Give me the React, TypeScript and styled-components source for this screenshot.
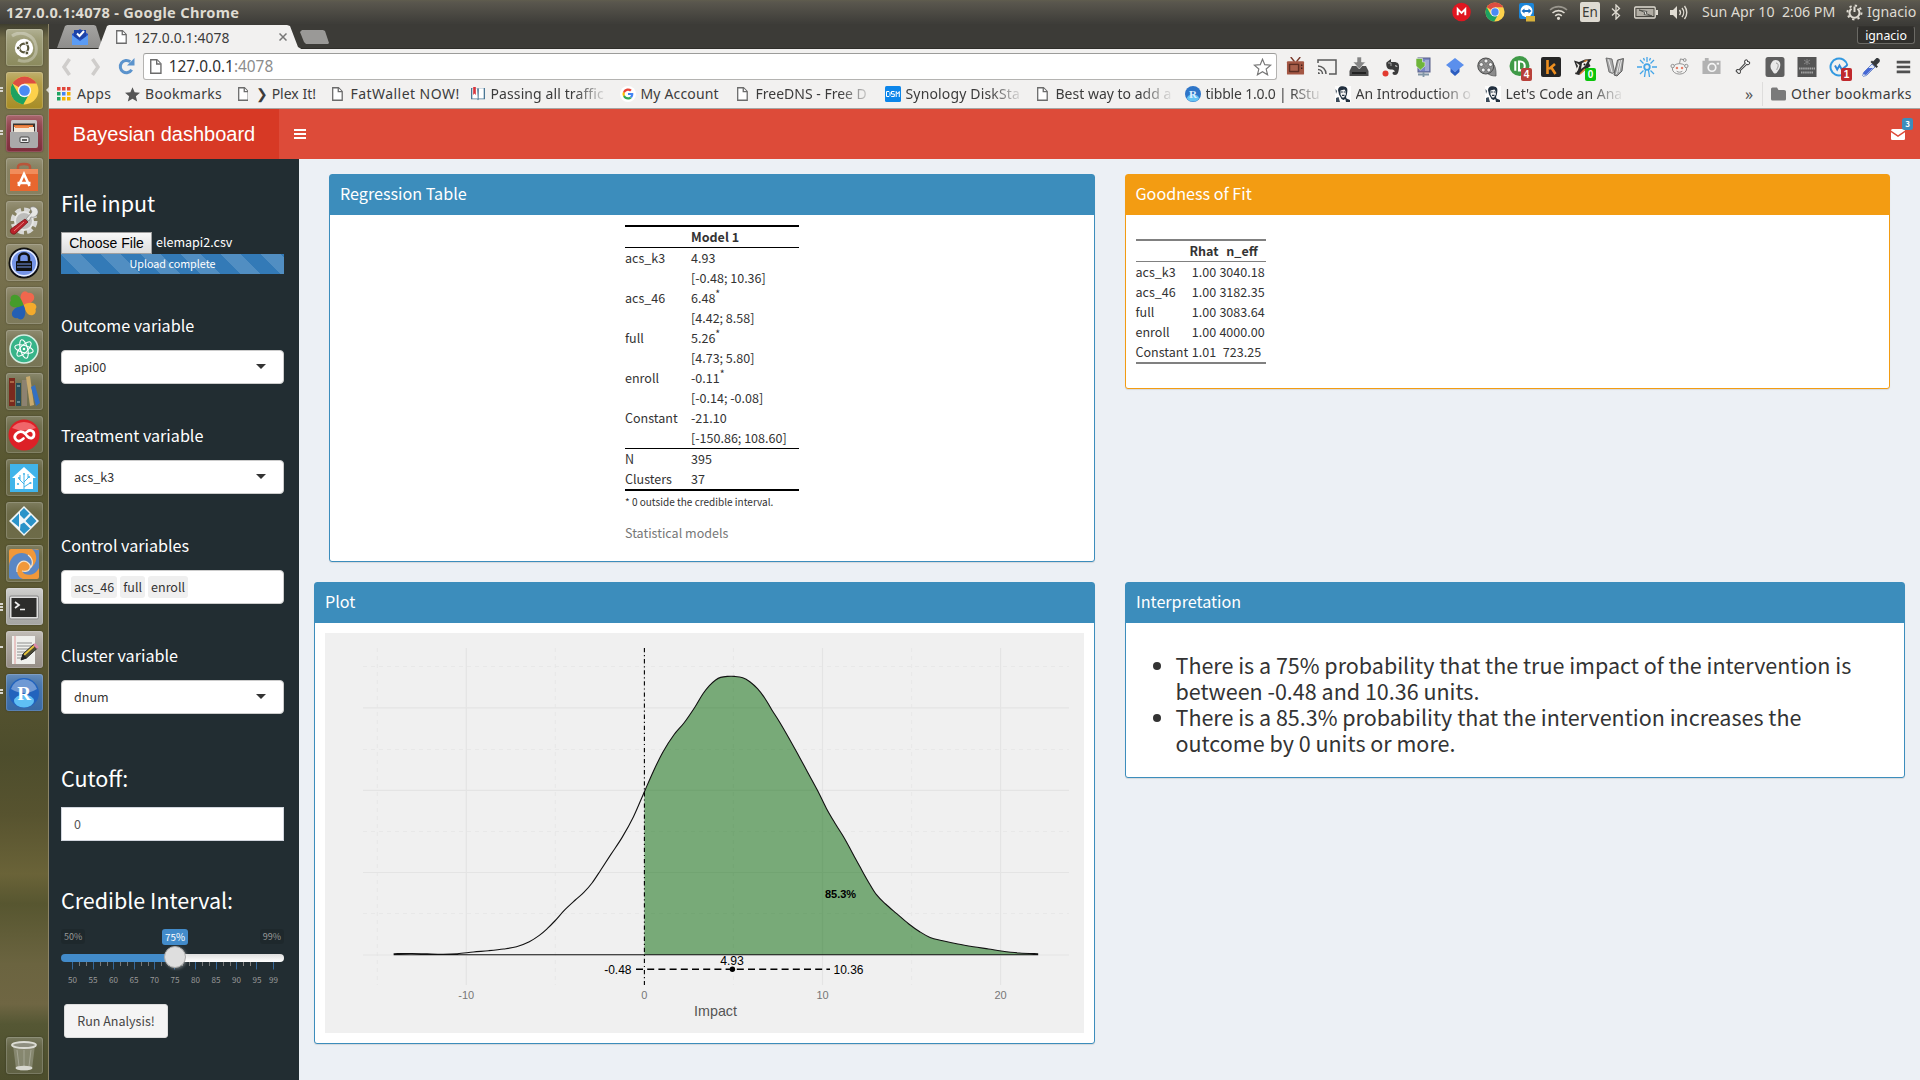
import React from "react";
import styled, { createGlobalStyle, css } from "styled-components";

const SANS = `"Noto Sans CJK SC", "Noto Sans", sans-serif`;
const UBUNTU = `"Noto Sans", "Open Sans", sans-serif`;
const ARIAL = `"Liberation Sans", Arial, sans-serif`;

const Global = createGlobalStyle`
  * { box-sizing: border-box; }
  body { margin: 0; background: #ecf0f5; overflow: hidden; }
  svg { display: block; }
`;

/* ---------- desktop ---------- */
const Desktop = styled.div`
  width: 1920px;
  height: 1080px;
  display: flex;
  flex-direction: column;
  font-family: ${SANS};
  font-size: 12.54px;
  color: #333;
`;
const TopPanel = styled.header`
  height: 24px;
  flex: none;
  display: flex;
  align-items: center;
  justify-content: space-between;
  padding: 0 5px 0 6px;
  background: linear-gradient(#605d4e 0, #5a574e 2px, #3e3d39 23px);
  color: #dfdbd2;
  font-family: ${UBUNTU};
`;
const WindowTitle = styled.div`
  font-size: 14.6px;
  font-weight: 700;
  letter-spacing: 0.3px;
  line-height: 24px;
`;
const Tray = styled.div`
  display: flex;
  align-items: center;
  height: 24px;
`;
const TraySlot = styled.div<{ $w: number }>`
  width: ${(p) => p.$w}px;
  display: flex;
  justify-content: center;
`;
const TrayText = styled.div<{ $w: number }>`
  width: ${(p) => p.$w}px;
  font-size: 14.2px;
  line-height: 24px;
  white-space: pre;
`;
const LangBadge = styled.div`
  width: 20px;
  height: 20px;
  border-radius: 2px;
  background: #dfdbd2;
  color: #3c3b37;
  font-size: 13.5px;
  line-height: 20px;
  text-align: center;
`;
const Main = styled.div`
  flex: 1;
  display: flex;
  min-height: 0;
`;

/* ---------- launcher ---------- */
const Launcher = styled.nav`
  width: 49px;
  flex: none;
  display: flex;
  flex-direction: column;
  align-items: center;
  gap: 6px;
  padding: 5px 0 6px;
  border-right: 1px solid #8b8468;
  background: linear-gradient(
    #3f3e2e 0, #6f6a48 14px, #79734f 120px, #77704d 250px, #6a6744 330px, #56552f 450px, #5e5b34 540px,
    #595531 640px, #4d4d2c 730px, #57532f 790px, #6a6338 850px, #575630 880px, #6b6440 940px, #6f6643 980px,
    #555734 1000px, #4c4d2c 1056px
  );
`;
const Tile = styled.div<{ $bg?: string; $last?: boolean }>`
  position: relative;
  width: 37px;
  height: 37px;
  flex: none;
  border-radius: 3px;
  background: ${(p) => p.$bg || "rgba(255,255,255,.11)"};
  box-shadow: inset 0 0 0 1px rgba(255, 255, 255, 0.16), inset 0 8px 8px -4px rgba(255, 255, 255, 0.16), 0 0 2px rgba(0, 0, 0, 0.35);
  display: flex;
  align-items: center;
  justify-content: center;
  ${(p) => p.$last && css`margin-top: auto;`}
`;
const Pips = styled.div`
  position: absolute;
  left: -6px;
  top: 15px;
  width: 3px;
  display: grid;
  gap: 1px;
`;
const Pip = styled.i`
  height: 2px;
  background: #d8d6cf;
`;
const FocusArrow = styled.i`
  position: absolute;
  right: -6px;
  top: 15px;
  border: 3px solid transparent;
  border-right-color: #dcdad2;
  border-left: 0;
`;

/* ---------- browser ---------- */
const Browser = styled.div`
  flex: 1;
  display: flex;
  flex-direction: column;
  min-width: 0;
`;
const TabStrip = styled.div`
  height: 25px;
  flex: none;
  display: flex;
  justify-content: space-between;
  background: #3c3b37;
  border-bottom: 1px solid #2f2e2a;
  font-family: ${UBUNTU};
`;
const Tabs = styled.div`
  display: flex;
  padding: 1px 0 0 8px;
`;
const PinnedTab = styled.div`
  width: 46px;
  height: 23px;
  display: flex;
  justify-content: center;
  padding-top: 3px;
  background: linear-gradient(#a5a4a2, #8e8d8b);
  clip-path: polygon(8px 1px, 10px 0, 37px 0, 39px 1px, 46px 23px, 0 23px);
`;
const ActiveTab = styled.div`
  width: 205px;
  height: 25px;
  margin-left: -5px;
  display: flex;
  align-items: center;
  padding: 0 16px 1px 18px;
  background: #f2f1f0;
  color: #3c3c3c;
  font-size: 13.9px;
  clip-path: polygon(9px 1px, 11px 0, 189px 0, 192px 1px, 200px 22px, 205px 25px, 0 25px);
`;
const TabTitle = styled.span`
  flex: 1;
  margin-left: 7px;
  letter-spacing: 0.1px;
`;
const NewTab = styled.div`
  width: 29px;
  height: 14px;
  margin: 5px 0 0 -3px;
  background: #9a9997;
  clip-path: polygon(2px 0, 23px 0, 25px 1px, 29px 13px, 28px 14px, 6px 14px, 4px 12px, 0 2px);
`;
const Profile = styled.div`
  height: 18px;
  width: 58px;
  margin: 2px 5px 0 0;
  border: 1px solid #6b6a65;
  border-top-color: #33322e;
  border-radius: 3px;
  background: #302f2c;
  color: #fff;
  font-size: 12.3px;
  line-height: 17px;
  text-align: center;
`;
const Toolbar = styled.div`
  height: 34px;
  flex: none;
  display: flex;
  align-items: center;
  background: #f2f1f0;
  padding: 1px 0 0 9px;
`;
const NavSlot = styled.div<{ $w: number }>`
  width: ${(p) => p.$w}px;
  display: flex;
  justify-content: center;
`;
const Omnibox = styled.div`
  width: 1134px;
  height: 27px;
  margin-left: 8px;
  display: flex;
  align-items: center;
  padding: 0 4px 0 6px;
  border: 1px solid #b4b3b1;
  border-top-color: #9c9c9a;
  border-radius: 3px;
  background: #fff;
  font-family: ${UBUNTU};
  font-size: 15.4px;
  color: #303030;
`;
const Url = styled.span`
  flex: 1;
  margin-left: 7px;
  line-height: 24px;
`;
const Port = styled.span`
  color: #8c8c8c;
`;
const Extensions = styled.div`
  display: flex;
  margin-left: 2px;
`;
const ExtSlot = styled.div`
  position: relative;
  width: 32px;
  height: 24px;
  display: flex;
  align-items: center;
  justify-content: center;
`;
const ExtBadge = styled.b<{ $bg: string }>`
  position: absolute;
  left: 18px;
  top: 13px;
  width: 11px;
  height: 13px;
  border-radius: 2px;
  background: ${(p) => p.$bg};
  color: #fff;
  font: 700 10px/13px ${ARIAL};
  text-align: center;
`;
const Bookmarks = styled.div`
  height: 26px;
  flex: none;
  display: flex;
  align-items: center;
  padding: 0 8px 3px 7px;
  background: #f2f1f0;
  border-bottom: 1px solid #a6a6a4;
  font-family: ${UBUNTU};
  font-size: 14px;
  color: #3c3c3c;
`;
const Bookmark = styled.div<{ $w: number }>`
  width: ${(p) => p.$w}px;
  flex: none;
  display: flex;
  align-items: center;
`;
const BookmarkIcon = styled.div`
  width: 16px;
  margin-right: 5px;
  display: flex;
  justify-content: center;
  flex: none;
`;
const BookmarkLabel = styled.span<{ $fade?: boolean; $ls?: number }>`
  line-height: 20px;
  white-space: nowrap;
  letter-spacing: ${(p) => p.$ls || 0}px;
  ${(p) =>
    p.$fade &&
    css`
      mask-image: linear-gradient(90deg, #000 84px, transparent 118px);
    `}
`;
const Overflow = styled.div`
  margin-left: auto;
  width: 17px;
  font-size: 16px;
  line-height: 20px;
  color: #555;
`;
const Divider = styled.div`
  width: 1px;
  height: 24px;
  background: #dedddc;
  margin-right: 7px;
`;

/* ---------- dashboard ---------- */
const Header = styled.div`
  height: 50px;
  flex: none;
  display: flex;
  align-items: center;
  background: #dd4b39;
`;
const Logo = styled.div`
  width: 230px;
  height: 50px;
  background: #d73925;
  color: #fff;
  font: 20px/50px ${ARIAL};
  text-align: center;
`;
const Burger = styled.div`
  margin-left: 15px;
  width: 12px;
  display: grid;
  gap: 2px;
`;
const BurgerLine = styled.i`
  height: 2px;
  background: #fff;
`;
const Mail = styled.div`
  position: relative;
  margin: 0 15px 0 auto;
`;
const MailBadge = styled.b`
  position: absolute;
  right: -8px;
  top: -11px;
  width: 11px;
  height: 12px;
  border-radius: 2.5px;
  background: #3c8dbc;
  color: #fff;
  font: 700 8px/12px ${SANS};
  text-align: center;
`;
const Body = styled.div`
  flex: 1;
  display: flex;
  min-height: 0;
`;
const Sidebar = styled.aside`
  width: 250px;
  flex: none;
  display: flex;
  flex-direction: column;
  background: #222d32;
  color: #fff;
  padding: 30px 15px 0 12px;
`;
const Title = styled.h3<{ $mt?: number }>`
  margin: ${(p) => p.$mt || 0}px 0 15px;
  height: 28px;
  font-size: 21.5px;
  line-height: 28px;
  font-weight: 400;
`;
const FieldLabel = styled.h4`
  margin: 41px 0 15px;
  height: 20px;
  font-size: 16.15px;
  line-height: 20px;
  font-weight: 400;
`;
const FileRow = styled.div`
  display: flex;
  align-items: center;
  height: 22px;
  gap: 4px;
`;
const FileName = styled.span`
  height: 22px;
  line-height: 20px;
`;
const FileButton = styled.div`
  width: 91px;
  height: 22px;
  border: 1px solid #a0a0a0;
  background: linear-gradient(#f8f8f8, #dddddd);
  color: #000;
  font: 14px/20px ${ARIAL};
  text-align: center;
`;
const Progress = styled.div`
  height: 20px;
  background-color: #337ab7;
  background-image: linear-gradient(
    45deg,
    rgba(255, 255, 255, 0.15) 25%, transparent 25%, transparent 50%,
    rgba(255, 255, 255, 0.15) 50%, rgba(255, 255, 255, 0.15) 75%, transparent 75%, transparent
  );
  background-size: 40px 40px;
  font-size: 10.75px;
  line-height: 20px;
  text-align: center;
`;
const Input = styled.div<{ $square?: boolean; $tags?: boolean }>`
  height: 34px;
  display: flex;
  align-items: center;
  gap: 3px;
  padding: 0 ${(p) => (p.$tags ? 9 : 17)}px ${(p) => (p.$tags ? 0 : 2)}px ${(p) => (p.$tags ? 9 : 12)}px;
  border: 1px solid ${(p) => (p.$square ? "#d2d6de" : "#ccc")};
  border-radius: ${(p) => (p.$square ? 0 : 4)}px;
  background: #fff;
  color: ${(p) => (p.$square ? "#555" : "#333")};
`;
const Caret = styled.i`
  margin: 0 0 0 auto;
  border: 5px solid transparent;
  border-top-color: #333;
  border-bottom: 0;
`;
const Tag = styled.span`
  height: 22px;
  padding: 0 3px;
  border-radius: 3px;
  background: #efefef;
  line-height: 22px;
`;
const Slider = styled.div`
  height: 60px;
  display: flex;
  flex-direction: column;
`;
const SliderLabels = styled.div`
  display: grid;
  grid-template-columns: 101px 1fr auto;
  height: 25px;
  align-items: start;
  justify-items: start;
`;
const SliderLabel = styled.span<{ $on?: boolean }>`
  height: ${(p) => (p.$on ? 16 : 15)}px;
  padding: 0 3px;
  border-radius: 3px;
  background: ${(p) => (p.$on ? "#428bca" : "rgba(0,0,0,.1)")};
  color: ${(p) => (p.$on ? "#fff" : "#999")};
  font-size: ${(p) => (p.$on ? 9.9 : 9)}px;
  line-height: ${(p) => (p.$on ? 16 : 15)}px;
`;
const Track = styled.div`
  position: relative;
  height: 8px;
  border-radius: 4px;
  background: linear-gradient(90deg, #428bca 110px, transparent 110px), linear-gradient(#dedede, #fff);
`;
const Handle = styled.i`
  position: absolute;
  left: 103px;
  top: -8px;
  width: 22px;
  height: 22px;
  border: 1px solid #aaa;
  border-radius: 50%;
  background: #dedede;
  box-shadow: 1px 1px 3px rgba(255, 255, 255, 0.3);
`;
const RunButton = styled.div`
  width: 104px;
  height: 34px;
  margin: 15px 0 0 3px;
  border: 1px solid #ddd;
  border-radius: 3px;
  background: #f4f4f4;
  color: #444;
  line-height: 32px;
  text-align: center;
`;

const Content = styled.main`
  flex: 1;
  background: #ecf0f5;
  padding: 15px 15px 0;
  display: flex;
  flex-direction: column;
  gap: 20px;
`;
const Row = styled.div<{ $inset?: boolean }>`
  display: grid;
  grid-template-columns: 1fr 1fr;
  gap: 30px;
  align-items: start;
  padding: 0 ${(p) => (p.$inset ? 15 : 0)}px;
`;
const Box = styled.section<{ $tone: string; $h: number }>`
  height: ${(p) => p.$h}px;
  border: 1px solid ${(p) => p.$tone};
  border-radius: 3px;
  background: #fff;
  box-shadow: 0 1px 1px rgba(0, 0, 0, 0.1);
`;
const BoxTitle = styled.div<{ $tone: string }>`
  height: 40px;
  padding-left: 10px;
  background: ${(p) => p.$tone};
  color: #fff;
  font-size: 16.15px;
  line-height: 36px;
`;
const BoxBody = styled.div`
  padding: 10px;
`;
const RegTable = styled.div`
  width: 174px;
  margin: 0 0 0 285px;
  border-top: 2px solid #000;
  line-height: 20px;
`;
const RegRow = styled.div<{ $rule?: boolean; $head?: boolean }>`
  display: grid;
  grid-template-columns: 66px 1fr;
  height: ${(p) => (p.$rule ? 21 : 20)}px;
  font-weight: ${(p) => (p.$head ? 700 : 400)};
  ${(p) => p.$rule && css`border-bottom: 1px solid #000;`}
`;
const Star = styled.sup`
  font-size: 10.5px;
  line-height: 0;
  vertical-align: 5px;
`;
const Footnote = styled.div`
  height: 26px;
  border-top: 2px solid #000;
  font-size: 10.02px;
  line-height: 22px;
  white-space: nowrap;
`;
const Caption = styled.div`
  padding: 8px 0;
  color: #777;
`;
const FitTable = styled.div`
  width: 130px;
  margin: 14px 0 0;
  border-top: 2px solid #808080;
  border-bottom: 2px solid #808080;
  line-height: 20px;
`;
const FitRow = styled.div<{ $head?: boolean }>`
  display: grid;
  grid-template-columns: 54px 29px 47px;
  height: ${(p) => (p.$head ? 21 : 20)}px;
  text-align: center;
  font-weight: ${(p) => (p.$head ? 700 : 400)};
  ${(p) => p.$head && css`border-bottom: 1px solid #808080;`}
`;
const FitName = styled.span`
  text-align: left;
`;
const Findings = styled.ul`
  margin: 19px 0 0;
  padding: 0 0 0 39.5px;
  font-size: 21.5px;
  line-height: 26px;
`;
const Finding = styled.li`
  margin: 0;
`;

/* ---------- small drawings ---------- */
const PageIcon = ({ s = 14 }: { s?: number }) => (
  <svg width={s * 0.78} height={s} viewBox="0 0 11 14" fill="#fff" stroke="#6b6b6b" strokeWidth="1.3">
    <path d="M.7.7h5.8l3.8 3.8v8.8H.7z" />
    <path d="M6.3.9v3.8h3.8" />
  </svg>
);
const Chrome = ({ s }: { s: number }) => (
  <svg width={s} height={s} viewBox="0 0 48 48">
    <circle cx="24" cy="24" r="23" fill="#fdd14b" />
    <path d="M24 24 4.1 12.5A23 23 0 0 1 43.9 12.5H24z" fill="#dd4d42" />
    <path d="M4.1 12.5A23 23 0 0 0 22 47l10-17.5L24 24 14 29.8z" fill="#1ca261" />
    <circle cx="24" cy="24" r="11" fill="#f5f5f5" />
    <circle cx="24" cy="24" r="8.8" fill="#4a8af4" />
  </svg>
);
const Face = () => (
  <svg width="16" height="16" viewBox="0 0 16 16">
    <rect width="16" height="16" fill="#fdfdfd" />
    <path d="M3.500 6C2 2 5 0 8 .3S13 2 12.300 5.500L12 8l-1 3 .5 1.500 3.500 1.500v2h-4l-.7-3-1.800 1-2-1-1-2L4 8.500z" fill="#22303f" />
    <path d="M5.500 4.500 9.500 3.500l1.300 2v3L9 11.500H7L5.500 8.500z" fill="#f4f4f4" />
    <path d="M5.800 6h2M8.700 6h2M7 9.300h2.500" stroke="#22303f" strokeWidth="1.200" />
    <path d="M.5 3l1.500 2-1 3M1 12l2.500-1 1.500 5H1z" fill="#3c4b59" />
  </svg>
);
const Svg20 = ({ children, s = 20 }: { children: React.ReactNode; s?: number }) => (
  <svg width={s} height={s} viewBox="0 0 20 20">{children}</svg>
);

const extensions: { icon: React.ReactNode; badge?: [string, string] }[] = [
  { icon: <Svg20 s={19}><path d="M5 0l4 5M15 0l-4 5" stroke="#7a3b2c" strokeWidth="1.500" /><rect x="1" y="4.500" width="18" height="14" rx="1" fill="#a45744" /><rect x="3" y="7" width="11" height="9" rx="1" fill="#5d2e23" /><rect x="4.500" y="8.500" width="8" height="6" fill="#a9604c" /><path d="M16.500 8v1.500M16.500 11v1.500" stroke="#43211a" strokeWidth="1.500" /></Svg20> },
  { icon: <Svg20><path d="M1 6V3h18v14h-7" fill="none" stroke="#5a5a5a" strokeWidth="1.500" /><path d="M1 9a8 8 0 0 1 8 8M1 12.500A4.500 4.500 0 0 1 5.500 17" fill="none" stroke="#5a5a5a" strokeWidth="1.500" /><path d="M1 15a2 2 0 0 1 2 2H1z" fill="#5a5a5a" /></Svg20> },
  { icon: <Svg20><path d="M3 9h14l2.500 5v5H.5v-5z" fill="#4d4d4d" /><path d="M8 0h4.500v5h4l-6.200 7L4 5h4z" fill="#858585" stroke="#f2f1f0" strokeWidth=".6" /><path d="M3 15h14v2H3z" fill="#222" /></Svg20> },
  { icon: <Svg20><path d="M6 5l4-3v3h3c4 0 5.500 2 5 6s-1 7-4 7-3.500-3.500 0-3.500c-1-1-1-2-3-2s-4 0-5-2-1-5.500 0-5.500z" fill="#3b3b3b" /><path d="M14 9c1-.5 2 0 2 1" stroke="#eee" fill="none" /><path d="M7 6h3v3" stroke="#aaa" fill="none" /><circle cx="4.500" cy="16.500" r="3" fill="#e23b30" /></Svg20> },
  { icon: <Svg20><rect x="5" y="1" width="12" height="14" fill="#7b87c4" stroke="#565f86" /><path d="M3 1.500h6.500V5H12v4l-4.500 4L3 9z" fill="#6fb53a" stroke="#eee" strokeWidth=".6" /><path d="M13 3v11M15 3v11" stroke="#c6cbe6" /><path d="M5 17.500h11M10.500 15v5" stroke="#8195a5" strokeWidth="1.800" /></Svg20> },
  { icon: <Svg20><path d="M10 1 19 8l-9 7L1 8z" fill="#5b8fec" /><path d="M5.500 11.300V15l4.500 4 4.500-4v-3.700L10 15z" fill="#2c5dc0" /></Svg20> },
  { icon: <Svg20><path d="M14 5c5 3 5 9 5 14-4 0-7-1-9-3z" fill="#8b8b8b" stroke="#5b5b5b" strokeWidth=".8" /><circle cx="8.800" cy="9" r="8" fill="#8d8d8d" stroke="#4b4b4b" /><g fill="#efefef" stroke="#444" strokeWidth=".6"><circle cx="9" cy="4" r="2" /><circle cx="4.300" cy="7.500" r="2" /><circle cx="13.500" cy="7.500" r="2" /><circle cx="6.200" cy="13" r="2" /><circle cx="11.800" cy="13" r="2" /><circle cx="9" cy="9" r="1" /></g></Svg20> },
  { icon: <Svg20 s={21}><circle cx="10" cy="9.500" r="9.500" fill="#3f9a47" /><path d="M6 5v9M9.500 5.300v8.400h1.300a4.200 4.200 0 0 0 0-8.400z" stroke="#fff" strokeWidth="2" fill="none" /></Svg20>, badge: ["4", "#b8413a"] },
  { icon: <Svg20><rect width="20" height="20" rx="2" fill="#262626" /><path d="M6.500 3v14M14 7l-6 5M10 10l4.500 7" stroke="#ee8f20" strokeWidth="2.600" fill="none" /></Svg20> },
  { icon: <Svg20><path d="M1 3.500l5 1.500L12 2.500 18.500 2l-2.500 4 1.500 3-6 4.500L6 18l-4-1 2-5z" fill="#2b2b2b" /><path d="M3 5.500l3.500 2.500L5 13l-2 3-.5-2L5 9z" fill="#f3f0ea" /><path d="M9 6l6-2.500-3 5.500-4 3z" fill="#f3f0ea" /><path d="M10 4l5-1.500L12.500 5z" fill="#e18431" /><circle cx="11.500" cy="7.500" r="1" fill="#111" /><path d="M7 17l5-5" stroke="#e18431" strokeWidth="1.500" /></Svg20>, badge: ["0", "#0bc50b"] },
  { icon: <Svg20><path d="M1 1l6 1 2.500 13-2 1.500L4 15z" fill="#a9a9a9" stroke="#666" strokeWidth=".9" /><path d="M3.500 2.500 7 15" stroke="#eee" /><path d="M9 18 12.500 3l6-1.500L17 14l-5 5z" fill="#9d9d9d" stroke="#555" strokeWidth=".9" /><path d="M14.500 3.500 11.500 17M16.500 3 14 15" stroke="#eaeaea" /></Svg20> },
  { icon: <Svg20><circle cx="10" cy="10" r="2.800" fill="none" stroke="#44a5e8" strokeWidth="1.800" /><path d="M10 0v5M3 3l3.500 3.500M17 3l-3.500 3.500M0 10h5M15 10h5M3 17l3.500-3.500M17 17l-3.500-3.500M8.500 13l-1 7M11.500 13l1 7M6.500 1l1 2.500M13.500 1l-1 2.500" stroke="#44a5e8" strokeWidth="1.300" /></Svg20> },
  { icon: <Svg20 s={19}><ellipse cx="10" cy="12.500" rx="7.500" ry="5.500" fill="#f5f4f3" stroke="#8d8d8d" /><circle cx="2.800" cy="9.500" r="1.800" fill="#eee" stroke="#8d8d8d" /><circle cx="17.200" cy="9.500" r="1.800" fill="#eee" stroke="#8d8d8d" /><path d="M10 7l1-5 4 1" stroke="#8d8d8d" fill="none" /><circle cx="15.500" cy="3.200" r="1.500" fill="#eee" stroke="#8d8d8d" /><circle cx="7.300" cy="11.500" r="1.300" fill="#e8806a" /><circle cx="12.700" cy="11.500" r="1.300" fill="#e8806a" /><path d="M7 15c2 1.300 4 1.300 6 0" stroke="#8d8d8d" fill="none" /></Svg20> },
  { icon: <Svg20 s={19}><path d="M3 1h4v3H3zM.5 4H19.500v14H.5z" fill="#b2b2b2" /><circle cx="10.500" cy="11" r="4" fill="none" stroke="#f5f5f5" strokeWidth="1.800" /><rect x="15.500" y="6" width="2.500" height="2" fill="#f5f5f5" /></Svg20> },
  { icon: <Svg20 s={16}><path d="M13 1.500c1.500-1 3 0 2.700 1.700C17.500 3 19 4.500 18 6c-.8 1.200-2.300 1.200-3.300.6L6.500 14.500c.6 1.500.3 3.200-1.200 3.500-1.300.3-2-.5-2-1.500C2 16.500 1.200 15.500 1.600 14.400c.5-1.300 2.200-1.400 3.400-.8L12.800 5.200c-.8-1-.9-2.800.2-3.700z" fill="#fff" stroke="#444" strokeWidth="1.300" /></Svg20> },
  { icon: <Svg20><rect x=".5" width="19" height="20" rx="2.500" fill="#5f5f5f" /><path d="M10.500 3c4 0 5.500 3 4.500 7-.6 2.500-2 3.500-3 5.500-1 1.500-3 1.500-4-.5C7 13 5.500 12 5.500 9.500c0-3 2-6.500 5-6.500z" fill="#e9e9e9" /><path d="M11 6c2 0 2.500 2 2 4-.5 1.500-1.500 2-1 3" stroke="#999" fill="none" /></Svg20> },
  { icon: <Svg20><rect x=".5" y="0" width="19" height="20" fill="#555" /><path d="M10 2v6M7 3l6 4M13 3l-6 4" stroke="#858585" /><path d="M2 11.500h16M4 15.500h12" stroke="#a5a5a5" strokeDasharray="1.500 .6" strokeWidth="2.200" /></Svg20> },
  { icon: <Svg20><path d="M18.300 8A8.500 8.500 0 1 0 13 17.900" fill="none" stroke="#3399e0" strokeWidth="2" /><path d="M6 8.500l2.200 4 2.300-4 2.300 4L18.500 8" fill="none" stroke="#2f86d6" strokeWidth="1.900" /></Svg20>, badge: ["1", "#c0282c"] },
  { icon: <Svg20><path d="M11 7l3 3-8 8c-1 1-2 .5-3.500 1.500L1.500 18.500C2.500 17 2 16 3 15z" fill="#dfe7f7" stroke="#7089c8" /><path d="M7 11h5l-7 7-3-1 1-2z" fill="#4668d5" /><path d="M9.500 5l6 6 1.500-1.500-1.500-1.500 3-3c1.500-2-1.500-5-3.500-3.500l-3 3L11 3.500z" fill="#35383c" /></Svg20> },
  { icon: <Svg20 s={18}><path d="M3 3h15v3H3zM3 8.500h15v3H3zM3 14h15v3H3z" fill="#505050" /></Svg20> },
];

const bookmarks: { w: number; icon: React.ReactNode; label: string; fade?: boolean; ls?: number }[] = [
  { w: 68, label: "Apps", ls: 0.35, icon: <svg width="14" height="14" viewBox="0 0 14 14">{["#e0453a", "#e0453a", "#e0453a", "#1fa463", "#4285f4", "#f4b400", "#1fa463", "#f4b400", "#f4b400"].map((c, i) => <rect key={i} x={(i % 3) * 5} y={Math.floor(i / 3) * 5} width="3.500" height="3.500" fill={c} />)}</svg> },
  { w: 111, label: "Bookmarks", ls: 0.3, icon: <svg width="15" height="15" viewBox="0 0 24 24" fill="#555"><path d="M12 .5l3.400 8 8.600.7-6.600 5.600 2.100 8.400L12 18.700l-7.500 4.500 2.100-8.400L0 9.200l8.600-.7z" /></svg> },
  { w: 94.500, label: "❯ Plex It!", icon: <PageIcon /> },
  { w: 140, label: "FatWallet NOW!", icon: <PageIcon />, ls: 0.45 },
  { w: 150, label: "Passing all traffic", fade: true, ls: 0.1, icon: <svg width="14" height="16" viewBox="0 0 16 16"><path d="M0 1h7l1 1 1-1h7v13H9l-1 1-1-1H0z" fill="#4a7795" /><path d="M1.500 1.500H7l.7 11.500H1.500zM9 1.500h5.500V13H8.700z" fill="#fff" /><path d="M2.500 0h3v9L4 7.500 2.500 9z" fill="#d9343c" /></svg> },
  { w: 115, label: "My Account", ls: 0.15, icon: <svg width="16" height="16" viewBox="0 0 24 24"><circle cx="12" cy="12" r="12" fill="#fff" /><path d="M20 12c0-.6 0-1-.2-1.600H12v3h4.500c-.2 1-.8 1.900-1.700 2.500l2.700 2.100C19 16.600 20 14.500 20 12z" fill="#4285f4" /><path d="M12 20.300c2.200 0 4.100-.7 5.500-2l-2.700-2.100c-.8.5-1.700.8-2.800.8-2.200 0-4-1.400-4.700-3.400L4.600 15.700A8.300 8.300 0 0 0 12 20.300z" fill="#34a853" /><path d="M7.300 13.600a5 5 0 0 1 0-3.200L4.600 8.300a8.300 8.300 0 0 0 0 7.400z" fill="#fbbc05" /><path d="M12 7c1.200 0 2.300.4 3.200 1.200l2.400-2.400A8.300 8.300 0 0 0 4.600 8.300l2.700 2.100C8 8.400 9.800 7 12 7z" fill="#ea4335" /></svg> },
  { w: 150, label: "FreeDNS - Free D", fade: true, icon: <PageIcon /> },
  { w: 150, label: "Synology DiskSta", fade: true, ls: 0.15, icon: <svg width="16" height="16" viewBox="0 0 16 16"><rect width="16" height="16" rx="1.500" fill="#0c86ea" /><path d="M1.500 5.500H4l1 1v3l-1 1H1.500zM9.500 5.500h-3V8h2.800v2.500H6.200M11.200 11V5.500L12.700 8l1.600-2.500V11" fill="none" stroke="#fff" /></svg> },
  { w: 150, label: "Best way to add a", fade: true, icon: <PageIcon /> },
  { w: 150, label: "tibble 1.0.0 | RStu", fade: true, ls: -0.2, icon: <svg width="16" height="16" viewBox="0 0 16 16"><circle cx="8" cy="8" r="8" fill="#2e75c8" /><ellipse cx="8" cy="12" rx="6" ry="3.500" fill="#65c4f4" /><text x="8" y="12" fontSize="11" fontFamily="Liberation Serif" fontWeight="700" textAnchor="middle" fill="#dfefff">R</text></svg> },
  { w: 150, label: "An Introduction o", fade: true, icon: <Face /> },
  { w: 150, label: "Let's Code an Ana", fade: true, icon: <Face /> },
];

const I30 = ({ children }: { children: React.ReactNode }) => (
  <svg width="32" height="32" viewBox="0 0 32 32">{children}</svg>
);

const launcher: { icon: React.ReactNode; bg?: string; pips?: number; focus?: boolean }[] = [
  { bg: "linear-gradient(#a6a583, #8b8a5d)", icon: <I30><path d="M4 4c8-6 22-2 24 10s-8 18-18 14" fill="none" stroke="rgba(255,255,255,.3)" strokeWidth="3" /><circle cx="16" cy="16" r="9.200" fill="#fff" /><circle cx="16" cy="16" r="4.300" fill="none" stroke="#57553a" strokeWidth="2.200" /><g fill="#57553a" stroke="#fff" strokeWidth=".9"><circle cx="10.300" cy="16" r="1.900" /><circle cx="18.900" cy="11" r="1.900" /><circle cx="18.900" cy="21" r="1.900" /></g></I30> },
  { bg: "linear-gradient(#b7a458, #a88d25)", pips: 2, focus: true, icon: <Chrome s={29} /> },
  { bg: "linear-gradient(#9c5058, #7d2c3a)", pips: 2, icon: <I30><rect x="3" y="2" width="26" height="27" rx="1.500" fill="#c8c8c8" /><rect x="5" y="5.500" width="22" height="8" fill="#383431" /><path d="M6 7h19v6H6z" fill="#e07333" /><path d="M6 9h20v5H6z" fill="#f2e9dc" /><path d="M7 8h14v2H7z" fill="#ed8b4f" /><path d="M2 14h28v14a2 2 0 0 1-2 2H4a2 2 0 0 1-2-2z" fill="#aaaaaa" /><rect x="12" y="19" width="9" height="5.500" rx="1" fill="#eee" stroke="#444" /><path d="M14 22h5" stroke="#333" strokeWidth="1.500" /></I30> },
  { icon: <I30><path d="M10 9V6c0-4 12-4 12 0v3" stroke="#b8553a" strokeWidth="2.500" fill="none" /><path d="M2 8h28v22H2z" fill="#e8672f" /><path d="M2 8h28v5H2z" fill="#f18c5b" /><path d="M10.500 25l5.500-12 5.500 12M9.500 22h13" stroke="#fff" strokeWidth="2.600" fill="none" /></I30> },
  { icon: <I30><circle cx="16" cy="17" r="11" fill="none" stroke="#d8d8d6" strokeWidth="5" strokeDasharray="5.600 3" /><circle cx="16" cy="17" r="9" fill="#bdbdbb" stroke="#e6e6e4" strokeWidth="2" /><path d="M18 15l6-7-2-4c3-3 9 0 8 5-1 3-4 5-7 4l-2 4z" fill="#e6e6e4" stroke="#777" strokeWidth=".6" /><path d="M17 15l3 3L7 30c-3 1-6-2-4-5z" fill="#b9222a" stroke="#6b1014" strokeWidth=".7" /><path d="M16 18 6 27" stroke="#e97b7b" /></I30> },
  { icon: <I30><circle cx="16" cy="16" r="14.500" fill="#7594e6" stroke="#111" strokeWidth="2" /><circle cx="16" cy="16" r="12.800" fill="none" stroke="#e7edff" strokeWidth="1.500" /><path d="M11 15v-4c0-6 10-6 10 0v4" stroke="#111" strokeWidth="2.500" fill="none" /><rect x="8" y="14" width="16" height="10" rx="1" fill="#111" /><path d="M9 17h14M9 20h14" stroke="#7594e6" /></I30> },
  { icon: <I30><path d="M15.500 15C11 11 12 4 15 2c2.500-1.500 4 0 5 1 2-.5 5 0 6 3 1.500 5-4 8-10.500 9z" fill="#f0674d" /><path d="M15.500 15c4-3 10-3 12-.5 1.500 2 .8 3.500 0 4.500.8 2.500 0 5-2.500 6-5 1.500-8-4-9.500-10z" fill="#f4ab2c" /><path d="M15.500 15c3 5 2 12-1 14-2 1-4 0-5-1-2.500.5-5-.5-5.500-3-1-5 5-9 11.500-10z" fill="#235fb4" /><path d="M15.500 15c-5 3-11 3-13 .5-1.500-2-.5-4 .5-5-1-2.500 0-5 2.500-5.500 5-1 8 4 10 10z" fill="#459c2a" /></I30> },
  { icon: <I30><circle cx="16" cy="16" r="14" fill="#37b489" stroke="#d6efe4" strokeWidth="1.500" /><g fill="none" stroke="#fff" strokeWidth="1.100"><ellipse cx="16" cy="16" rx="9.500" ry="3.600" transform="rotate(15 16 16)" /><ellipse cx="16" cy="16" rx="9.500" ry="3.600" transform="rotate(75 16 16)" /><ellipse cx="16" cy="16" rx="9.500" ry="3.600" transform="rotate(135 16 16)" /></g><circle cx="16" cy="16" r="1.300" fill="#fff" /></I30> },
  { icon: <I30><path d="M1 2h6v28H1z" fill="#7a2a1e" /><path d="M2 6h4M2 25h4" stroke="#d9a46c" /><path d="M8 7h5v23H8z" fill="#274c58" /><path d="M9 10h3M9 26h3" stroke="#a6c2c7" /><path d="M14 4h5v26h-5z" fill="#8d8270" /><path d="M18 1l4-1 4 29-4 1z" fill="#c9ab6e" /><path d="M23 11l4-2 5 18-4 3z" fill="#3470c2" /></I30> },
  { icon: <I30><circle cx="16" cy="16" r="15.500" fill="#dd2027" /><path d="M4 9A15 15 0 0 1 28 9q-12 5-24 0z" fill="#f0666a" /><path d="M15.500 19.500l-2 1.500c-4 3-9-2-5.500-6 3-3 6.500-3.500 9.500 0l1.500 2c3 3.500 7 2.500 7-1.500 0-4-4-5-6.500-3l-2 1.500" fill="none" stroke="#fff" strokeWidth="2.700" strokeLinecap="round" /></I30> },
  { icon: <I30><rect x="2" y="2" width="28" height="28" fill="#41b4ea" /><path d="M16 5l12 11h-3v11H7V16H4z" fill="#fff" /><path d="M16 27V13M16 22l-5-5M16 20l5-5M16 25l6-4M12 13v5M20 12v4" stroke="#41b4ea" strokeWidth="1" /><g fill="#41b4ea"><circle cx="11" cy="16" r="1.100" /><circle cx="21" cy="15" r="1.100" /><circle cx="16" cy="12" r="1.100" /><circle cx="22.500" cy="21" r="1.100" /><circle cx="10" cy="22" r="1.100" /></g></I30> },
  { icon: <I30><path d="M16 1 31 16 16 31 1 16z" fill="#f2f6f8" /><path d="M16 3l5.500 5.500-5.500 5.500-4-4V7zM11 8.500V22L3.500 16zM23 10l5.500 6-5.500 5.500-5.500-5.500zM12.500 19.500l3.500-2 6 6-6 5.500-4-4z" fill="#2a93c9" /></I30> },
  { icon: <I30><rect x="1" y="1" width="30" height="30" rx="2" fill="#f0983a" /><path d="M31 2v18c-4 8-14 9-17 3 8 2 11-6 5-9C13 11 8 17 9 24c1 4 3 6 6 7H3a2 2 0 0 1-2-2V18C2 6 14 2 20 7c6 4 5 11 2 13 8-4 8-14 2-19z" fill="#5a87c4" /><path d="M14 23c8 2 11-5 5-9M20 7c6 4 5 11 2 13M9 24c-1-7 4-13 10-10" stroke="#f7e3c8" strokeWidth="1.200" fill="none" /></I30> },
  { bg: "linear-gradient(#c9c9c7, #a5a5a2)", pips: 3, icon: <I30><rect x="1.500" y="5" width="29" height="23" rx="1.500" fill="#ddd" stroke="#888" /><rect x="3.500" y="7" width="25" height="19" fill="#2c2c2b" /><path d="M7 11l4 3-4 3M12 18.500h5" stroke="#eee" strokeWidth="1.700" fill="none" /></I30> },
  { bg: "linear-gradient(#b9b4ae, #958d86)", pips: 1, icon: <I30><path d="M4 2h23v28H4z" fill="#efefec" /><path d="M7 2v28" stroke="#e09a9a" /><path d="M9 9h15M9 12h15M9 15h15M9 18h12M9 21h9M9 24h8" stroke="#8f8f8d" strokeWidth="1.100" /><path d="M13 26l2-6L26 10l3.500 4-11 10z" fill="#4b4a33" stroke="#222" strokeWidth=".9" /><path d="M16 21 26 12" stroke="#e8c43b" strokeWidth="1.700" /><path d="M13 26l2-6 4 4z" fill="#222" /><path d="M25 11l2-2 4 4-2 2z" fill="#d98ba9" /></I30> },
  { bg: "linear-gradient(#4f7cb0, #3768a4)", pips: 2, icon: <I30><circle cx="16" cy="16" r="15" fill="#2263bd" /><ellipse cx="16" cy="24" rx="10" ry="6.500" fill="#5fc0f5" /><path d="M3 12a13.500 13.500 0 0 1 26 0q-13 8-26 0z" fill="#fff" opacity=".35" /><text x="16" y="22.500" fontSize="19" fontFamily="Liberation Serif" fontWeight="700" textAnchor="middle" fill="#fff">R</text></I30> },
];

const regression: [string, string, boolean?][] = [
  ["acs_k3", "4.93"], ["", "[-0.48; 10.36]"],
  ["acs_46", "6.48", true], ["", "[4.42; 8.58]"],
  ["full", "5.26", true], ["", "[4.73; 5.80]"],
  ["enroll", "-0.11", true], ["", "[-0.14; -0.08]"],
  ["Constant", "-21.10"], ["", "[-150.86; 108.60]"],
  ["N", "395"], ["Clusters", "37"],
];
const fit = [
  ["acs_k3", "1.00", "3040.18"],
  ["acs_46", "1.00", "3182.35"],
  ["full", "1.00", "3083.64"],
  ["enroll", "1.00", "4000.00"],
  ["Constant", "1.01", "723.25"],
];

/* ---------- density plot ---------- */
const X0 = 319.4;
const UNIT = 17.81;
const sx = (v: number) => X0 + v * UNIT;
const BASE = 321.7;
// [impact, height in px above the baseline]
const density: [number, number][] = [
  [-14.05, 1], [-13.05, 1.2], [-12.2, 0.8], [-11.3, 0.5], [-10.5, 1], [-9.6, 2.7], [-8.75, 4], [-7.9, 5.700], [-7.18, 8],
  [-6.46, 13], [-5.9, 19.300], [-5.46, 26], [-5.03, 33.700], [-4.46, 45], [-3.88, 54.700], [-3.4, 62.300], [-2.94, 71.700],
  [-2.45, 84.700], [-1.88, 100.300], [-1.25, 117.300], [-0.62, 137.700], [0, 163], [0.5, 183.300], [1.05, 203], [1.65, 219.700],
  [2.22, 231.700], [2.85, 248], [3.28, 260.700], [3.65, 269], [4, 274.700], [4.28, 277.300], [4.66, 278.300], [5.06, 278.300],
  [5.52, 277], [5.92, 273], [6.35, 266], [6.78, 256], [7.15, 245], [7.58, 233], [8.07, 218], [8.58, 201.700], [9.15, 183],
  [9.73, 164], [10.22, 146.300], [10.73, 130.700], [11.22, 116.700], [11.65, 102.700], [12.08, 88.700], [12.54, 74],
  [13.03, 60], [13.54, 50.700], [14.17, 41], [14.83, 31], [15.46, 23], [16.04, 17.300], [16.75, 14], [17.6, 10.700],
  [18.47, 8], [19.33, 5.700], [20.04, 3.700], [21.05, 1.700], [22.08, 1],
];
const smooth = (pts: [number, number][]) => {
  const p = pts.map(([x, h]) => [sx(x), BASE - h]);
  let d = `M${p[0][0]} ${p[0][1]}`;
  for (let i = 0; i < p.length - 1; i++) {
    const a = p[i - 1] || p[i], b = p[i], c = p[i + 1], e = p[i + 2] || c;
    d += `C${b[0] + (c[0] - a[0]) / 6} ${b[1] + (c[1] - a[1]) / 6} ${c[0] - (e[0] - b[0]) / 6} ${c[1] - (e[1] - b[1]) / 6} ${c[0]} ${c[1]}`;
  }
  return d;
};
const zeroIndex = density.findIndex(([x]) => x === 0);

const DensityPlot = () => (
  <svg width="759" height="400" viewBox="0 0 759 400" fontFamily="Liberation Sans, Arial, sans-serif">
    <rect width="759" height="400" fill="#f0f0f0" />
    <g stroke="#e4e4e4" fill="none">
      {[-15, -5, 5, 15].map((v) => <path key={v} d={`M${sx(v)} 15V352`} strokeDasharray="4 4" strokeWidth=".8" stroke="#e6e6e6" />)}
      {[33.5, 116.5, 198.5, 280.5].map((y) => <path key={y} d={`M38 ${y}H744`} strokeDasharray="4 4" strokeWidth=".8" stroke="#e6e6e6" />)}
      {[-10, 0, 10, 20].map((v) => <path key={v} d={`M${sx(v)} 15V352`} strokeWidth="1.200" />)}
      {[74.8, 157.3, 239.5, 322].map((y) => <path key={y} d={`M38 ${y}H744`} strokeWidth="1.200" />)}
    </g>
    <path d={`${smooth(density.slice(zeroIndex))}V${BASE}H${X0}z`} fill="#006400" fillOpacity=".5" />
    <path d={`${smooth(density)}V${BASE}H${sx(-14.05)}z`} fill="none" stroke="#111" strokeWidth="1.100" />
    <path d={`M${X0} 15V352`} stroke="#000" strokeWidth="1.100" strokeDasharray="4.300 2.800 1.200 2.800" />
    <path d="M311 336.300H505" stroke="#000" strokeWidth="1.400" strokeDasharray="7 4.200" />
    <circle cx="407.400" cy="336.300" r="2.700" />
    <g fontSize="12" fill="#000">
      <text x="306.500" y="341" textAnchor="end">-0.48</text>
      <text x="407" y="332" textAnchor="middle" fontSize="12.200">4.93</text>
      <text x="508.500" y="341">10.36</text>
      <text x="515.500" y="265.300" textAnchor="middle" fontSize="11" fontWeight="700">85.3%</text>
    </g>
    <g fontSize="11" fill="#777" textAnchor="middle">
      {[-10, 0, 10, 20].map((v) => <text key={v} x={sx(v)} y="366">{v}</text>)}
    </g>
    <text x="390.500" y="383" fontSize="14.300" fill="#555" textAnchor="middle">Impact</text>
  </svg>
);

const SliderGrid = () => {
  const at = (v: number) => 11.5 + (v - 50) * 4.1;
  const majors = [50, 55, 60, 65, 70, 75, 80, 85, 90, 95, 99];
  const minors = majors.slice(0, 9).flatMap((v) => [v + 1.66, v + 3.33]).concat([91.7, 93.3]);
  return (
    <svg width="223" height="26" viewBox="0 0 223 26" fontFamily='"Noto Sans CJK SC", sans-serif'>
      {minors.map((v, i) => <path key={i} d={`M${Math.round(at(v)) + 0.5} 0v4`} stroke="#8a8a8a" strokeWidth=".8" />)}
      {majors.map((v) => <path key={v} d={`M${Math.floor(at(v)) + 0.5} 0v7.500`} stroke="#35689a" />)}
      {majors.map((v) => <text key={v} x={at(v)} y="20.500" fontSize="8.100" fill="#999" textAnchor="middle">{v}</text>)}
    </svg>
  );
};

const SelectField = ({ label, value }: { label: string; value: string }) => (
  <>
    <FieldLabel>{label}</FieldLabel>
    <Input>{value}<Caret /></Input>
  </>
);

const BLUE = "#3c8dbc";
const ORANGE = "#f39c12";

export default function App() {
  return (
    <Desktop>
      <Global />
      <TopPanel>
        <WindowTitle>127.0.0.1:4078 - Google Chrome</WindowTitle>
        <Tray>
          <TraySlot $w={33}><svg width="19" height="20" viewBox="0 0 20 20"><circle cx="10" cy="10" r="9.800" fill="#e01620" /><path d="M6 13.500V7l4 4 4-4v6.500" stroke="#fff" strokeWidth="2" fill="none" /></svg></TraySlot>
          <TraySlot $w={33}><Chrome s={20} /></TraySlot>
          <TraySlot $w={32}><svg width="18" height="19" viewBox="0 0 18 19"><rect x="1" width="15" height="16" rx="2" fill="#1b86da" /><circle cx="8.500" cy="8" r="6" fill="#fff" /><path d="M3.500 8l3-2.500V7h4V5.500l3 2.500-3 2.500V9h-4v1.500z" fill="#1b6fc0" /><rect x="8" y="13" width="9" height="5.500" fill="#d8b13a" /></svg></TraySlot>
          <TraySlot $w={31}><svg width="19" height="15" viewBox="0 0 19 15" fill="none" stroke="#dfdbd2" strokeWidth="1.600"><path d="M1 5a12.500 12.500 0 0 1 17 0" opacity=".5" /><path d="M3.500 8a8.800 8.800 0 0 1 12 0" /><path d="M6.200 10.800a5 5 0 0 1 6.600 0" /><circle cx="9.500" cy="13.300" r=".8" fill="#dfdbd2" /></svg></TraySlot>
          <TraySlot $w={32}><LangBadge>En</LangBadge></TraySlot>
          <TraySlot $w={20}><svg width="10" height="16" viewBox="0 0 10 16" fill="none" stroke="#dfdbd2" strokeWidth="1.300"><path d="M1 4.500l7.500 7L5 15V1l3.500 3.500L1 11.500" /></svg></TraySlot>
          <TraySlot $w={40}><svg width="24" height="13" viewBox="0 0 24 13"><rect x=".7" y="1" width="20.500" height="11" rx="1" fill="none" stroke="#dfdbd2" strokeWidth="1.300" /><rect x="2.500" y="3" width="17" height="7" fill="#b1ada4" /><rect x="22" y="4" width="2" height="5" fill="#dfdbd2" /><path d="M5 4l8 1.500-1 2 6 2.500-8-1.500 1-2z" fill="#fff" stroke="#4a4943" strokeWidth=".9" /></svg></TraySlot>
          <TraySlot $w={27}><svg width="19" height="15" viewBox="0 0 19 15"><path d="M0 5h3l4-4v13l-4-4H0z" fill="#dfdbd2" /><path d="M9.500 5a4 4 0 0 1 0 5M12 3a7 7 0 0 1 0 9M14.500 1a10.500 10.500 0 0 1 0 13" fill="none" stroke="#dfdbd2" strokeWidth="1.400" /></svg></TraySlot>
          <TraySlot $w={9} />
          <TrayText $w={139}>Sun Apr 10  2:06 PM</TrayText>
          <TraySlot $w={26}><svg width="17" height="17" viewBox="0 0 17 17" fill="none" stroke="#dfdbd2"><circle cx="8.500" cy="8.500" r="7" strokeWidth="2" strokeDasharray="2.300 3.198" /><path d="M5.500 4.700a5 5 0 1 0 6 0" strokeWidth="2" /><path d="M8.500 2.500v5.500" strokeWidth="2" /></svg></TraySlot>
          <TrayText $w={48}>Ignacio</TrayText>
        </Tray>
      </TopPanel>
      <Main>
        <Launcher>
          {launcher.map((l, i) => (
            <Tile key={i} $bg={l.bg}>
              {l.icon}
              {l.pips && <Pips>{Array.from({ length: l.pips }, (_, k) => <Pip key={k} />)}</Pips>}
              {l.focus && <FocusArrow />}
            </Tile>
          ))}
          <Tile $last>
            <I30><path d="M5 5l3 24q8 3 16 0l3-24z" fill="rgba(200,200,190,.35)" /><ellipse cx="16" cy="5" rx="12" ry="3" fill="#8f8f80" stroke="#dcdcd4" strokeWidth="1.800" /><ellipse cx="16" cy="28" rx="8.500" ry="2.300" fill="#d7d7cf" /><path d="M9 10l2 16M16 10v16M23 10l-2 16" stroke="rgba(255,255,255,.25)" /></I30>
          </Tile>
        </Launcher>
        <Browser>
          <TabStrip>
            <Tabs>
              <PinnedTab><svg width="18" height="17" viewBox="0 0 18 17"><path d="M1 6l8-5 8 5v10H1z" fill="#2850c4" /><path d="M3 2h12v9H3z" fill="#1d43a8" /><path d="M1 7l8 6 8-6v10H1z" fill="#5b9cf5" /><path d="M6 5.500l2.500 2.500L13 3" stroke="#fff" strokeWidth="2" fill="none" /></svg></PinnedTab>
              <ActiveTab>
                <PageIcon s={14} />
                <TabTitle>127.0.0.1:4078</TabTitle>
                <svg width="8" height="8" viewBox="0 0 8 8" stroke="#777" strokeWidth="1.500"><path d="M.5.5l7 7M7.500.5l-7 7" /></svg>
              </ActiveTab>
              <NewTab />
            </Tabs>
            <Profile>ignacio</Profile>
          </TabStrip>
          <Toolbar>
            <NavSlot $w={16}><svg width="10" height="18" viewBox="0 0 10 18" fill="none" stroke="#cfcdcb" strokeWidth="3.500"><path d="M8.500 1 3 9l5.500 8" /></svg></NavSlot>
            <NavSlot $w={44}><svg width="10" height="18" viewBox="0 0 10 18" fill="none" stroke="#cfcdcb" strokeWidth="3.500"><path d="M1.500 1 7 9l-5.500 8" /></svg></NavSlot>
            <NavSlot $w={17}><svg width="17" height="19" viewBox="0 0 18 18"><path d="M14.500 12.500A6.500 6.500 0 1 1 13 4" fill="none" stroke="#5b93cc" strokeWidth="3.200" /><path d="M17.500 0v8H9.500z" fill="#5b93cc" /></svg></NavSlot>
            <Omnibox>
              <PageIcon s={15} />
              <Url>127.0.0.1<Port>:4078</Port></Url>
              <svg width="19" height="18" viewBox="0 0 24 23" fill="#fff" stroke="#777" strokeWidth="1.500"><path d="M12 1.500l2.900 7 7.600.6-5.800 5 1.800 7.400L12 17.500l-6.500 4 1.800-7.400-5.800-5 7.600-.6z" /></svg>
            </Omnibox>
            <Extensions>
              {extensions.map((e, i) => (
                <ExtSlot key={i}>
                  {e.icon}
                  {e.badge && <ExtBadge $bg={e.badge[1]}>{e.badge[0]}</ExtBadge>}
                </ExtSlot>
              ))}
            </Extensions>
          </Toolbar>
          <Bookmarks>
            {bookmarks.map((b) => (
              <Bookmark key={b.label} $w={b.w}>
                <BookmarkIcon>{b.icon}</BookmarkIcon>
                <BookmarkLabel $fade={b.fade} $ls={b.ls}>{b.label}</BookmarkLabel>
              </Bookmark>
            ))}
            <Overflow>»</Overflow>
            <Divider />
            <Bookmark $w={142}>
              <BookmarkIcon><svg width="15" height="14" viewBox="0 0 15 14" fill="#7a7a7a"><path d="M0 2q0-1.500 1.500-1.500H6L7.500 3H13q2 0 2 1.500V12q0 1.500-1.500 1.500h-12Q0 13.500 0 12z" /></svg></BookmarkIcon>
              <BookmarkLabel $ls={0.33}>Other bookmarks</BookmarkLabel>
            </Bookmark>
          </Bookmarks>
          <Header>
            <Logo>Bayesian dashboard</Logo>
            <Burger><BurgerLine /><BurgerLine /><BurgerLine /></Burger>
            <Mail>
              <svg width="14" height="11" viewBox="0 0 14 11"><path d="M0 1.500Q0 0 1.500 0h11Q14 0 14 1.500L7 6.300zM0 3.200l7 4.700 7-4.700V9.700Q14 11 12.700 11H1.300Q0 11 0 9.700z" fill="#fff" /></svg>
              <MailBadge>3</MailBadge>
            </Mail>
          </Header>
          <Body>
            <Sidebar>
              <Title>File input</Title>
              <FileRow><FileButton>Choose File</FileButton><FileName>elemapi2.csv</FileName></FileRow>
              <Progress>Upload complete</Progress>
              <SelectField label="Outcome variable" value="api00" />
              <SelectField label="Treatment variable" value="acs_k3" />
              <FieldLabel>Control variables</FieldLabel>
              <Input $tags><Tag>acs_46</Tag><Tag>full</Tag><Tag>enroll</Tag></Input>
              <SelectField label="Cluster variable" value="dnum" />
              <Title $mt={50}>Cutoff:</Title>
              <Input $square>0</Input>
              <Title $mt={45}>Credible Interval:</Title>
              <Slider>
                <SliderLabels>
                  <SliderLabel>50%</SliderLabel>
                  <SliderLabel $on>75%</SliderLabel>
                  <SliderLabel>99%</SliderLabel>
                </SliderLabels>
                <Track><Handle /></Track>
                <SliderGrid />
              </Slider>
              <RunButton>Run Analysis!</RunButton>
            </Sidebar>
            <Content>
              <Row $inset>
                <Box $tone={BLUE} $h={388}>
                  <BoxTitle $tone={BLUE}>Regression Table</BoxTitle>
                  <BoxBody>
                    <RegTable>
                      <RegRow $head $rule><span /><span>Model 1</span></RegRow>
                      {regression.map(([name, value, starred], i) => (
                        <RegRow key={i} $rule={i === 9}>
                          <span>{name}</span>
                          <span>{value}{starred && <Star>*</Star>}</span>
                        </RegRow>
                      ))}
                      <Footnote>* 0 outside the credible interval.</Footnote>
                      <Caption>Statistical models</Caption>
                    </RegTable>
                  </BoxBody>
                </Box>
                <Box $tone={ORANGE} $h={215}>
                  <BoxTitle $tone={ORANGE}>Goodness of Fit</BoxTitle>
                  <BoxBody>
                    <FitTable>
                      <FitRow $head><span /><span>Rhat</span><span>n_eff</span></FitRow>
                      {fit.map(([name, rhat, neff]) => (
                        <FitRow key={name}><FitName>{name}</FitName><span>{rhat}</span><span>{neff}</span></FitRow>
                      ))}
                    </FitTable>
                  </BoxBody>
                </Box>
              </Row>
              <Row>
                <Box $tone={BLUE} $h={462}>
                  <BoxTitle $tone={BLUE}>Plot</BoxTitle>
                  <BoxBody><DensityPlot /></BoxBody>
                </Box>
                <Box $tone={BLUE} $h={196}>
                  <BoxTitle $tone={BLUE}>Interpretation</BoxTitle>
                  <BoxBody>
                    <Findings>
                      <Finding>There is a 75% probability that the true impact of the intervention is between -0.48 and 10.36 units.</Finding>
                      <Finding>There is a 85.3% probability that the intervention increases the outcome by 0 units or more.</Finding>
                    </Findings>
                  </BoxBody>
                </Box>
              </Row>
            </Content>
          </Body>
        </Browser>
      </Main>
    </Desktop>
  );
}
